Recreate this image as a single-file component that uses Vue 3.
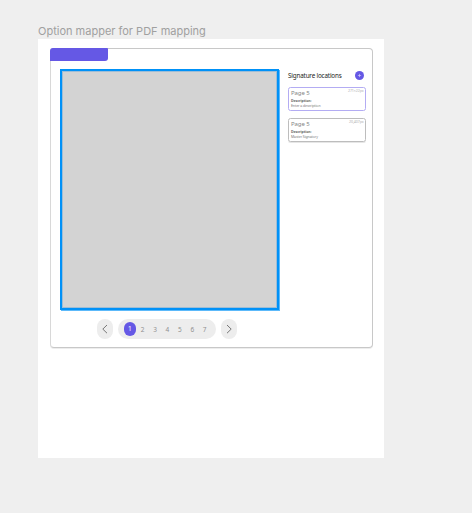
<script setup>
const pages = [1, 2, 3, 4, 5, 6, 7]
const locations = [
  { page: 'Page 5', size: '271×22px', text: 'Enter a description', active: true },
  { page: 'Page 5', size: '20,407px', text: 'Master Signatory', active: false },
]
</script>

<template>
  <main class="workspace">
    <h1 class="frame-name">Option mapper for PDF mapping</h1>
    <div class="artboard">
      <section class="mapper">
        <div class="tab"></div>
        <div class="content">
          <div class="viewer">
            <div class="document"></div>
            <nav class="pager">
              <button class="arrow">
                <svg viewBox="0 0 16 20"><path d="M10 6 5.8 10.1l4.2 4.1" /></svg>
              </button>
              <div class="pages">
                <span v-for="n in pages" :key="n" class="num" :class="{ current: n === 1 }">{{ n }}</span>
              </div>
              <button class="arrow">
                <svg viewBox="0 0 16 20"><path d="m6 6 4.2 4.1L6 14.2" /></svg>
              </button>
            </nav>
          </div>
          <aside class="side">
            <header class="side-head">
              <h2>Signature locations</h2>
              <button class="add">
                <svg viewBox="0 0 10 10"><path d="M5 3.2v3.6M3.2 5h3.6" /></svg>
              </button>
            </header>
            <article v-for="(l, i) in locations" :key="i" class="location" :class="{ active: l.active }">
              <div class="row">
                <span class="page">{{ l.page }}</span>
                <span class="size">{{ l.size }}</span>
              </div>
              <b class="label">Description:</b>
              <span class="text">{{ l.text }}</span>
            </article>
          </aside>
        </div>
      </section>
    </div>
  </main>
</template>

<style>
body {
  background: #efefef;
}
</style>

<style scoped>
* {
  box-sizing: border-box;
}
.workspace {
  width: 472px;
  height: 513px;
  padding: 24px 0 0 38px;
  background: #efefef;
  font-family: "Noto Sans", "Open Sans", sans-serif;
}
.frame-name {
  margin: 0;
  height: 15px;
  font: 400 11px/15px Inter, sans-serif;
  color: #a0a0a0;
  white-space: nowrap;
}
.artboard {
  width: 346px;
  height: 419px;
  padding: 9px 0 0 12px;
  background: #fff;
}
.mapper {
  width: 323px;
  height: 300px;
  border: 1px solid #c8c8c8;
  border-left-color: #d8d8d8;
  border-radius: 4px;
  box-shadow: 0 1px 0 #ededed;
}
.tab {
  width: 58px;
  height: 13px;
  margin: -1px 0 0 -1px;
  background: #6558e5;
  border-radius: 3px 1px 3px 0;
}
.content {
  display: flex;
  gap: 8px;
  padding: 8px 0 0 9px;
}
.viewer {
  width: 220px;
}
.document {
  width: 219px;
  height: 241px;
  margin-bottom: 1px;
  background: #d3d3d3;
  border: 2px solid #0091f7;
  box-shadow: 1px 1px 0 #5cb9fa, inset 0 0 0 1px #9dbdd6;
}
.pager {
  display: flex;
  gap: 5px;
  padding: 8px 0 0 37px;
}
.arrow {
  width: 16px;
  height: 20px;
  padding: 0;
  border: 0;
  border-radius: 8px;
  background: #ededed;
}
.arrow svg,
.add svg {
  display: block;
  width: 100%;
  height: 100%;
  fill: none;
  stroke: #777;
  stroke-width: 1;
}
.pages {
  display: flex;
  align-items: center;
  width: 98px;
  height: 20px;
  padding-left: 6px;
  border-radius: 10px;
  background: #ededed;
}
.num {
  width: 12.4px;
  height: 13px;
  text-align: center;
  font-size: 6.5px;
  line-height: 13px;
  color: #909090;
}
.num.current {
  width: 11.5px;
  height: 14px;
  line-height: 14px;
  margin-right: 1px;
  border-radius: 6px;
  background: #6558e5;
  color: #fff;
}
.side {
  width: 79px;
}
.side-head {
  display: flex;
  align-items: center;
  justify-content: space-between;
  height: 13px;
  padding-right: 3px;
}
.side-head h2 {
  margin: 0;
  font-size: 6.3px;
  line-height: 9px;
  font-weight: 400;
  letter-spacing: -0.17px;
  color: #222;
  white-space: nowrap;
}
.add {
  width: 9px;
  height: 9px;
  padding: 0;
  border: 0;
  border-radius: 50%;
  background: #6558e5;
}
.add svg {
  stroke: #d5d1fa;
  stroke-width: 0.7;
}
.location {
  display: flex;
  flex-direction: column;
  width: 78px;
  height: 24px;
  margin: 5px 0 7px;
  padding: 1px 1.5px 0 2px;
  border: 1px solid #bdbdbd;
  border-radius: 2.5px;
  box-shadow: 0 1px 0 #e6e6e6;
  white-space: nowrap;
}
.location.active {
  border-color: #b3acf3;
  box-shadow: none;
}
.row {
  display: flex;
  justify-content: space-between;
  height: 9px;
}
.page {
  font-size: 6px;
  line-height: 8px;
  letter-spacing: -0.1px;
  color: #858585;
}
.size {
  font-size: 3.6px;
  line-height: 4px;
  letter-spacing: -0.1px;
  color: #b0b0b0;
}
.label {
  font-size: 3.5px;
  line-height: 5px;
  letter-spacing: -0.05px;
  color: #666;
}
.text {
  font-size: 3.5px;
  line-height: 5px;
  letter-spacing: -0.08px;
  color: #777;
}
</style>
